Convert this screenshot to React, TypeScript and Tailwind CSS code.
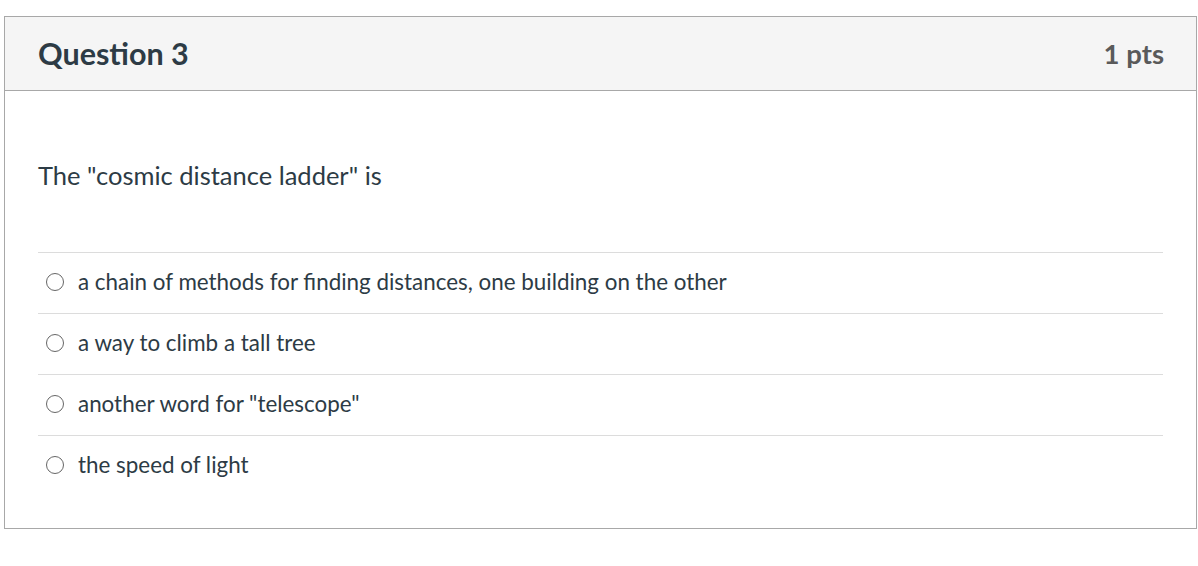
import React, { useState } from "react";

const answers = [
  "a chain of methods for finding distances, one building on the other",
  "a way to climb a tall tree",
  'another word for "telescope"',
  "the speed of light",
];

const App: React.FC = () => {
  const [selected, setSelected] = useState<number | null>(null);

  return (
    <div className="min-h-[566px] bg-white pt-4 pl-1" style={{ fontFamily: "Lato, 'Open Sans', sans-serif" }}>
      <div className="w-[1193px] border border-[#a8a8a8] bg-white">
        <div className="flex h-[74px] items-center justify-between border-b border-[#a8a8a8] bg-[#f5f5f5] pl-[33px] pr-[32px]">
          <h2 className="text-[30.5px] font-bold text-[#2d3b45]">Question 3</h2>
          <span className="text-[27.5px] font-bold text-[#5a5a5a]">1 pts</span>
        </div>
        <div className="px-[33px] pt-[68px] pb-[32px]">
          <p className="text-[25.5px] leading-[33px] text-[#2d3b45]">
            The "cosmic distance ladder" is
          </p>
          <div className="mt-[60px]">
            {answers.map((a, i) => (
              <label
                key={i}
                className="flex h-[61px] cursor-pointer items-center border-t border-[#dcdcdc] pb-[3px]"
                onClick={() => setSelected(i)}
              >
                <span className="ml-[8px] mr-[14px] flex h-[18px] w-[18px] items-center justify-center rounded-full border-[1.5px] border-[#666]">
                  {selected === i && <span className="h-[8px] w-[8px] rounded-full bg-[#555]" />}
                </span>
                <span className="text-[22.4px] text-[#2d3b45]">{a}</span>
              </label>
            ))}
          </div>
        </div>
      </div>
    </div>
  );
};

export default App;
